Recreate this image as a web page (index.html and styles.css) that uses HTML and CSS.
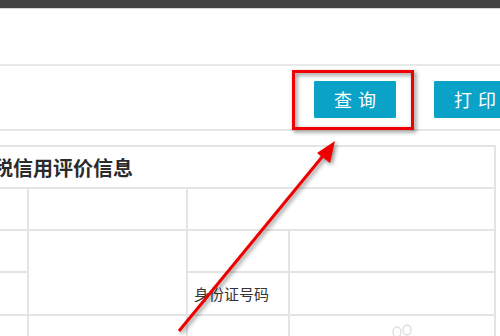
FILE: index.html
```html
<!DOCTYPE html>
<html lang="zh">
<head>
<meta charset="utf-8">
<link rel="stylesheet" href="styles.css">
</head>
<body>
<div class="page">
  <div class="topbar"></div>
  <div class="blank"></div>
  <div class="toolbar">
    <button class="btn">查询</button>
    <button class="btn">打印</button>
  </div>
  <div class="table-wrap">
    <div class="grid">
      <div class="cell title">纳税信用评价信息</div>
      <div class="cell a r1"></div>
      <div class="cell b r1"></div>
      <div class="cell cd r1"></div>
      <div class="cell a r2"></div>
      <div class="cell b r23"></div>
      <div class="cell c r2"></div>
      <div class="cell d r2"></div>
      <div class="cell a r3"></div>
      <div class="cell c r3 label">身份证号码</div>
      <div class="cell d r3"></div>
      <div class="cell a r4"></div>
      <div class="cell b r4"></div>
      <div class="cell c r4"></div>
      <div class="cell d r4"></div>
    </div>
  </div>

  <div class="highlight"></div>
  <svg class="arrow" width="500" height="336" viewBox="0 0 500 336">
    <line x1="179" y1="331" x2="327" y2="151" stroke="#ee0000" stroke-width="3"/>
    <polygon points="335,141 330,163 317,153" fill="#ee0000"/>
  </svg>
  <svg class="paw" width="30" height="20" viewBox="0 0 30 20">
    <ellipse cx="9" cy="12" rx="4" ry="5" fill="none" stroke="#dcdcdc" stroke-width="1.3"/>
    <ellipse cx="19" cy="10" rx="4" ry="5" fill="none" stroke="#dcdcdc" stroke-width="1.3"/>
  </svg>
</div>
</body>
</html>
```
FILE: styles.css
```css
html, body {
  margin: 0;
  padding: 0;
  background: #ffffff;
  overflow: hidden;
}
body {
  width: 500px;
  height: 336px;
  font-family: "Noto Sans CJK SC", "Noto Sans", sans-serif;
  color: #333333;
}
.page {
  position: relative;
  width: 500px;
  height: 336px;
  overflow: hidden;
}
.topbar {
  height: 8px;
  background: #434343;
  border-bottom: 1px solid #d8d8d8;
}
.blank {
  height: 55px;
  border-bottom: 2px solid #e8e8e8;
}
.toolbar {
  height: 65px;
  box-sizing: border-box;
  padding-top: 15px;
  padding-left: 314px;
  display: flex;
  gap: 38px;
  border-bottom: 2px solid #e6e6e6;
}
.btn {
  flex: none;
  width: 82px;
  height: 37px;
  border: none;
  border-radius: 1px;
  background: #0ba2c8;
  color: #ffffff;
  font-family: "Noto Sans CJK SC", sans-serif;
  font-size: 18px;
  letter-spacing: 6px;
  padding: 0 0 0 6px;
  line-height: 37px;
}
.table-wrap {
  padding-top: 14px;
}
.grid {
  margin-left: -40px;
  width: 536px;
  box-sizing: border-box;
  padding: 2px;
  background: #e4e4e4;
  display: grid;
  grid-template-columns: 65px 157px 100px 204px;
  grid-template-rows: 40px 40px 40px 41px 40px;
  gap: 2px;
}
.cell {
  background: #ffffff;
}
.title {
  grid-column: 1 / 5;
  grid-row: 1;
  font-size: 20px;
  font-weight: bold;
  color: #2b2b2b;
  padding-left: 11px;
  display: flex;
  align-items: center;
  white-space: nowrap;
}
.a { grid-column: 1; }
.b { grid-column: 2; }
.c { grid-column: 3; }
.d { grid-column: 4; }
.cd { grid-column: 3 / 5; }
.r1 { grid-row: 2; }
.r2 { grid-row: 3; }
.r3 { grid-row: 4; }
.r4 { grid-row: 5; }
.r23 { grid-row: 3 / 5; }
.label {
  font-size: 15px;
  padding-left: 6px;
  display: flex;
  align-items: center;
  color: #333;
  white-space: nowrap;
}
.highlight {
  position: absolute;
  left: 292px;
  top: 70px;
  width: 122px;
  height: 60px;
  box-sizing: border-box;
  border: 3px solid #f00000;
  filter: drop-shadow(2px 2px 2px rgba(0, 0, 0, 0.5));
}
.arrow {
  position: absolute;
  left: 0;
  top: 0;
  filter: drop-shadow(2px 2px 2px rgba(0, 0, 0, 0.45));
}
.paw {
  position: absolute;
  left: 388px;
  top: 320px;
}
```
